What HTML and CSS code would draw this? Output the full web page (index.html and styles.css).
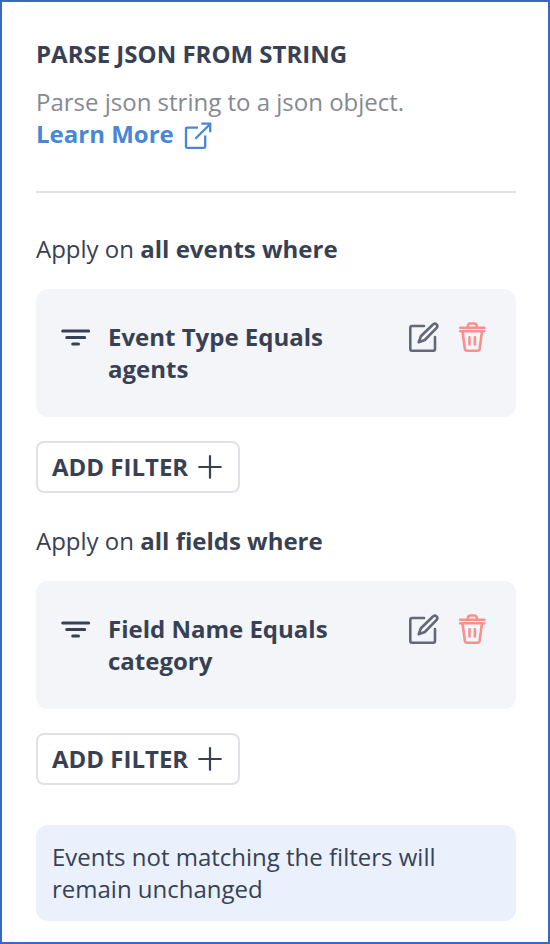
FILE: index.html
```html
<!DOCTYPE html>
<html lang="en">
<head>
<meta charset="utf-8">
<title>Parse JSON from string</title>
<link rel="stylesheet" href="styles.css">
</head>
<body>
<svg class="sprite" aria-hidden="true">
  <symbol id="filter" viewBox="0 0 32 24"><path d="M2.700 4H28.700M6.700 10.600H24.700M12.700 17H18.500"/></symbol>
  <symbol id="edit" viewBox="0 0 32 32"><path d="M16 4H4Q2.300 4 2.300 5.700V27Q2.300 28.700 4 28.700H25.300Q27 28.700 27 27V15"/><path d="M24.700 2.700Q26.700 .700 28.500 2.400Q30.200 4.200 28.400 6.100L16.800 18L10.700 20.200L12.900 14.300Z"/></symbol>
  <symbol id="trash" viewBox="0 0 32 32"><path d="M4.200 5.700H28.400M4.200 9.200H28.400M11.700 4.900Q12 1.500 14 1.500H18.400Q20.700 1.500 20.900 4.900M6.500 9.500L8.900 27Q9.200 28.700 11 28.700H21.500Q23.300 28.700 23.600 27L26 9.500M13.500 15.300V22.500M18.900 15.300V22.500"/></symbol>
  <symbol id="plus" viewBox="0 0 24 24"><path d="M1.200 12H22.800M12 1.200V22.800"/></symbol>
</svg>
<main class="panel">
  <header class="intro">
    <h1 class="title">PARSE JSON FROM STRING</h1>
    <p class="description">Parse json string to a json object.</p>
    <a class="learn-more">Learn More
      <svg class="external" viewBox="0 0 28 28"><path d="M14 5.600H3Q2 5.600 2 6.600V24.800Q2 25.800 3 25.800H20.200Q21.200 25.800 21.200 24.800V13.500M11.300 16.700L26 2.200M17.300 1.700H26.200V10.300"/></svg>
    </a>
  </header>
  <section class="group">
    <h2 class="scope">Apply on <b>all events where</b></h2>
    <div class="card">
      <svg class="filter"><use href="#filter"/></svg>
      <p class="rule">Event Type Equals agents</p>
      <svg class="edit"><use href="#edit"/></svg>
      <svg class="trash"><use href="#trash"/></svg>
    </div>
    <button class="add">ADD FILTER <svg class="plus"><use href="#plus"/></svg></button>
  </section>
  <section class="group">
    <h2 class="scope">Apply on <b>all fields where</b></h2>
    <div class="card">
      <svg class="filter"><use href="#filter"/></svg>
      <p class="rule">Field Name Equals category</p>
      <svg class="edit"><use href="#edit"/></svg>
      <svg class="trash"><use href="#trash"/></svg>
    </div>
    <button class="add">ADD FILTER <svg class="plus"><use href="#plus"/></svg></button>
  </section>
  <p class="notice">Events not matching the filters will remain unchanged</p>
</main>
</body>
</html>
```
FILE: styles.css
```css
* { box-sizing: border-box; }
body { margin: 0; font: 24px/32px "Open Sans", sans-serif; color: #384154; background: #fff; }
h1, h2, p { margin: 0; font-size: inherit; font-weight: 400; }
svg { fill: none; stroke: currentColor; stroke-width: 2.6; stroke-linecap: round; stroke-linejoin: round; flex: none; }
.sprite { display: none; }
.panel { height: 944px; padding: 36px 32px 0 34px; border: 2px solid #3969be; }
.intro { height: 155px; border-bottom: 2px solid #dcdfe4; }
.title { font-weight: 700; margin-bottom: 16px; }
.description { color: #858993; }
.learn-more { display: flex; gap: 10px; color: #4786d9; font-weight: 700; }
.external { width: 28px; height: 28px; margin-top: 4px; stroke-width: 2.3; stroke-linecap: butt; stroke-linejoin: miter; }
.group { margin-top: 32px; }
.intro + .group { margin-top: 40px; }
.scope { margin-bottom: 24px; }
.card { display: flex; align-items: flex-start; height: 128px; padding: 32px 28px 32px 24px; border-radius: 12px; background: #f4f5f8; }
.filter { width: 32px; height: 24px; margin-top: 6px; stroke-width: 3; }
.rule { width: 260px; margin: 0 40px 0 16px; font-weight: 700; }
.edit { width: 32px; height: 32px; margin-top: 1px; color: #636878; }
.trash { width: 32px; height: 32px; margin: 1px -4px 0 16px; color: #f98f8f; }
.add { display: flex; align-items: center; width: 204px; height: 52px; margin-top: 24px; padding: 0 14px; gap: 10px; border: 2px solid #dfe1e6; border-radius: 8px; background: #fff; color: inherit; font: inherit; font-weight: 700; }
.plus { width: 24px; height: 24px; stroke-width: 2.2; }
.notice { margin-top: 40px; padding: 16px; border-radius: 12px; background: #eaf1fc; }
```
